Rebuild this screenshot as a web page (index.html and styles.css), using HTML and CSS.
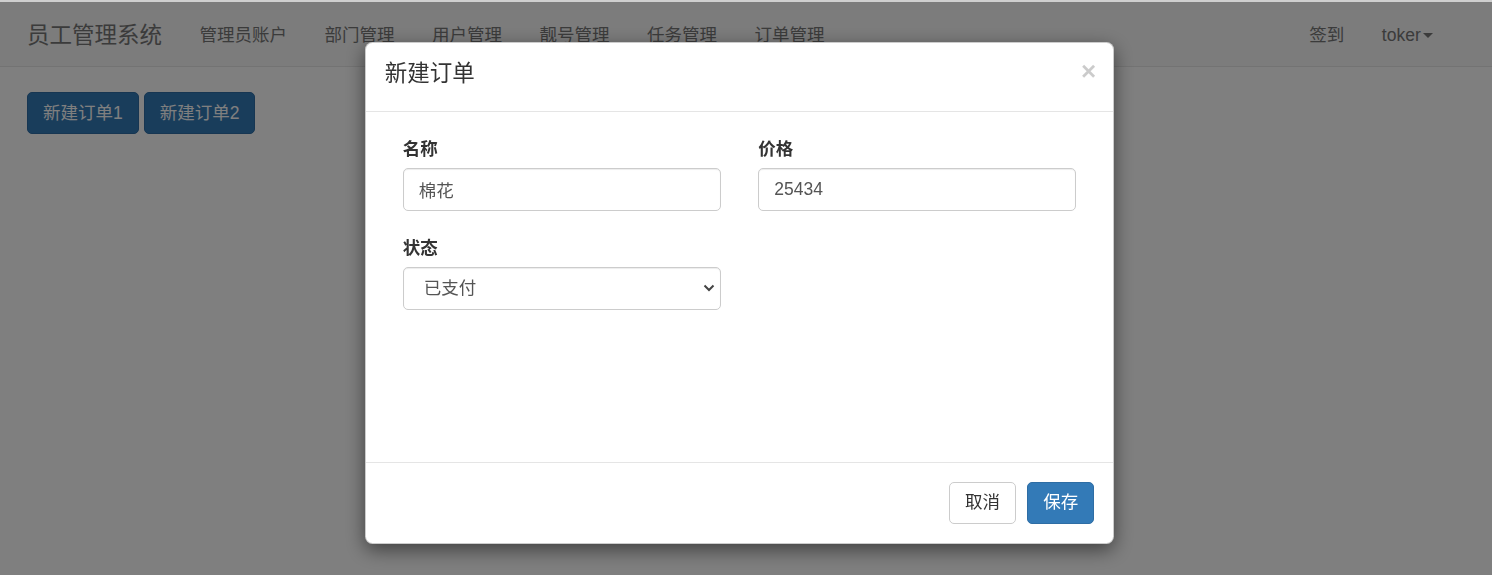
FILE: index.html
```html
<!DOCTYPE html>
<html lang="zh-CN">
<head>
<meta charset="utf-8">
<title>员工管理系统</title>
<link rel="stylesheet" href="styles.css">
</head>
<body>
<div class="topstrip"></div>
<nav class="navbar">
  <a class="brand" href="#">员工管理系统</a>
  <ul class="nav">
    <li><a href="#">管理员账户</a></li>
    <li><a href="#">部门管理</a></li>
    <li><a href="#">用户管理</a></li>
    <li><a href="#">靓号管理</a></li>
    <li><a href="#">任务管理</a></li>
    <li><a href="#">订单管理</a></li>
  </ul>
  <ul class="nav nav-right">
    <li><a href="#">签到</a></li>
    <li><a href="#">toker<span class="caret"></span></a></li>
  </ul>
</nav>
<main class="page">
  <div class="btn-row">
    <button class="btn btn-primary">新建订单1</button>
    <button class="btn btn-primary">新建订单2</button>
  </div>
</main>

<div class="backdrop"></div>

<div class="modal">
  <div class="modal-header">
    <h4 class="modal-title">新建订单</h4>
    <button class="close" type="button">×</button>
  </div>
  <div class="modal-body">
    <div class="form-grid">
      <div class="form-group">
        <label>名称</label>
        <input class="form-control" type="text" value="棉花">
      </div>
      <div class="form-group">
        <label>价格</label>
        <input class="form-control" type="text" value="25434">
      </div>
      <div class="form-group">
        <label>状态</label>
        <div class="select-wrap">
          <select class="form-control select">
            <option>已支付</option>
            <option>待支付</option>
          </select>
          <svg class="chevron" width="12" height="8" viewBox="0 0 12 8"><path d="M1.5 1.5 L6 6 L10.5 1.5" fill="none" stroke="#444" stroke-width="2"/></svg>
        </div>
      </div>
    </div>
  </div>
  <div class="modal-footer">
    <button class="btn btn-default">取消</button>
    <button class="btn btn-primary btn-save">保存</button>
  </div>
</div>
</body>
</html>
```

FILE: styles.css
```css
* { box-sizing: border-box; }
html, body { margin: 0; padding: 0; }
body {
  font-family: "Liberation Sans", Arial, "Noto Sans CJK SC", sans-serif;
  font-size: 17.5px;
  line-height: 25px;
  color: #333;
  background: #fff;
  height: 575px;
  overflow: hidden;
}
.topstrip {
  height: 2px;
  background: #cfcfcf;
  position: relative;
  z-index: 20;
}
.navbar {
  height: 65px;
  background: #f8f8f8;
  border-bottom: 1px solid #e7e7e7;
  display: flex;
  align-items: center;
  padding: 2px 40px 0 8.25px;
}
.brand {
  font-size: 22.5px;
  line-height: 25px;
  color: #777;
  text-decoration: none;
  padding: 0 18.75px;
}
.nav {
  list-style: none;
  margin: 0;
  padding: 0;
  display: flex;
}
.nav a {
  display: block;
  padding: 0 18.75px;
  color: #777;
  text-decoration: none;
  line-height: 25px;
}
.nav-right { margin-left: auto; }
.caret {
  display: inline-block;
  width: 0;
  height: 0;
  margin-left: 2.5px;
  vertical-align: middle;
  border-top: 5px solid #777;
  border-left: 5px solid transparent;
  border-right: 5px solid transparent;
}
.page { padding: 25px 27px 0; }
.btn-row { display: flex; gap: 5px; }
.btn {
  font-family: inherit;
  font-size: 17.5px;
  line-height: 25px;
  padding: 7.5px 15px;
  border: 1.25px solid transparent;
  border-radius: 5px;
  cursor: pointer;
}
.btn-primary { background: #337ab7; border-color: #2e6da4; color: #fff; }
.btn-default { background: #fff; border-color: #ccc; color: #333; }
.backdrop {
  position: fixed;
  left: 0; right: 0; top: 2px; bottom: 0;
  background: rgba(0,0,0,0.5);
  z-index: 10;
}
.modal {
  position: fixed;
  left: 365px;
  top: 42px;
  width: 749px;
  background: #fff;
  border: 1.25px solid rgba(0,0,0,0.2);
  border-radius: 7.5px;
  box-shadow: 0 6px 19px rgba(0,0,0,0.5);
  z-index: 30;
}
.modal-header {
  display: flex;
  align-items: center;
  justify-content: space-between;
  padding: 15px 18.75px 21px 18.75px;
  border-bottom: 1.25px solid #e5e5e5;
}
.modal-title {
  margin: 0;
  font-size: 22.5px;
  line-height: 32px;
  font-weight: normal;
  color: #333;
}
.close {
  background: none;
  border: 0;
  padding: 0;
  margin-right: -2px;
  font-family: "Liberation Sans", Arial, sans-serif;
  font-size: 26px;
  font-weight: bold;
  line-height: 1;
  color: #000;
  opacity: 0.2;
  margin-top: -6px;
}
.modal-body {
  height: 350px;
  padding: 18.75px 18px;
}
.form-grid {
  display: grid;
  grid-template-columns: 1fr 1fr;
}
.form-group {
  padding: 0 18.75px;
  margin-bottom: 19.5px;
}
.form-group label {
  display: block;
  font-weight: bold;
  margin-top: 6px;
  margin-bottom: 6.25px;
  line-height: 25px;
}
.form-control {
  display: block;
  width: 100%;
  height: 42.5px;
  padding: 7.5px 15px;
  font-family: inherit;
  font-size: 17.5px;
  line-height: 25px;
  color: #555;
  background: #fff;
  border: 1.25px solid #ccc;
  border-radius: 5px;
  box-shadow: inset 0 1px 1px rgba(0,0,0,0.075);
}
.select-wrap { position: relative; }
.select {
  appearance: none;
  -webkit-appearance: none;
  padding-left: 20px;
}
.chevron {
  position: absolute;
  right: 6px;
  top: 17px;
  pointer-events: none;
}
.modal-footer {
  display: flex;
  justify-content: flex-end;
  padding: 18.75px;
  border-top: 1.25px solid #e5e5e5;
}
.btn-save { margin-left: 11.25px; }
```
